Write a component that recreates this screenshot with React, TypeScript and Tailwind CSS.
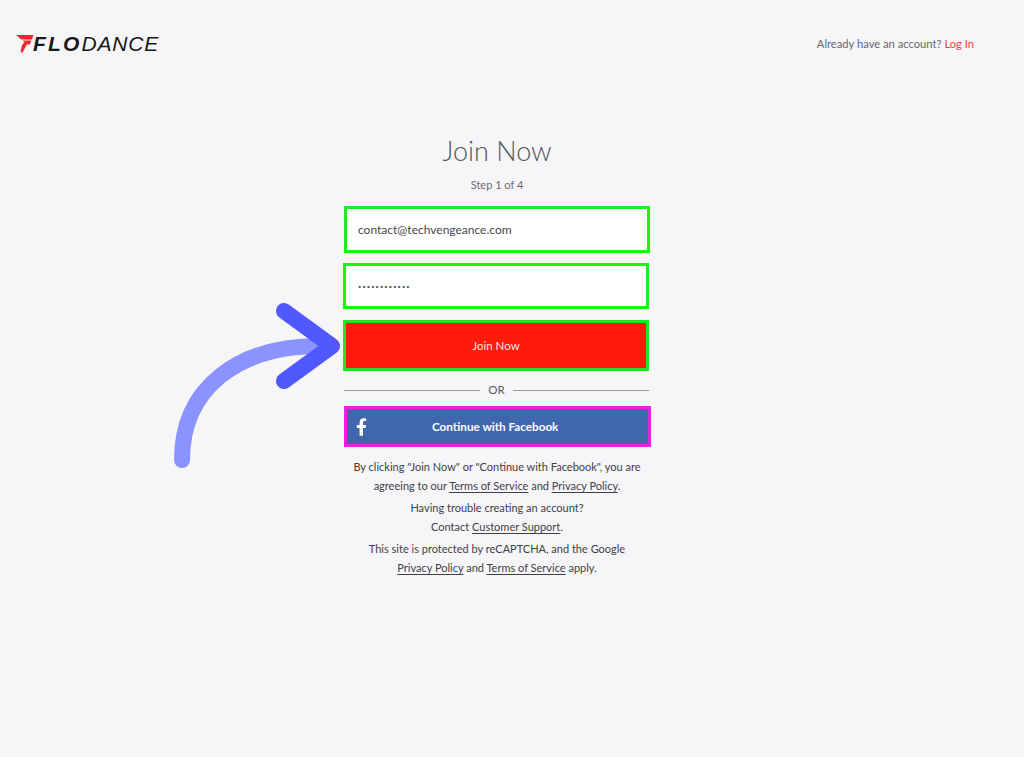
const bodyFont = "font-['Lato','Noto_Sans',sans-serif]";

const Logo = () => {
  return (
    <div className="flex items-center">
      <svg width="18" height="18" viewBox="0 0 18 18" className="shrink-0">
        <path d="M0 0H17.5L16 4.6H5.2z" fill="#ee2a2c" />
        <path d="M6.4 5.6H15.4L14 9.6H10.8L6.6 17.6H4.6C5 12.6 5.8 9 8.6 7.4z" fill="#ee2a2c" />
      </svg>
      <div className="ml-[-1px] font-['Liberation_Sans',sans-serif] text-[21px] leading-6 italic text-[#17181a]">
        <span className="font-bold tracking-[2.2px]">FLO</span>
        <span className="font-normal tracking-[0.8px]">DANCE</span>
      </div>
    </div>
  );
};

const Arrow = () => {
  return (
    <svg
      width="200"
      height="190"
      viewBox="160 290 200 190"
      className="absolute top-[290px] left-[160px]"
    >
      <path
        d="M182 460C182 388 238 346 320 346"
        fill="none"
        stroke="#8a93ff"
        strokeWidth="16"
        strokeLinecap="round"
      />
      <path
        d="M284 311L332 346L284 381"
        fill="none"
        stroke="#5058ff"
        strokeWidth="16"
        strokeLinecap="round"
        strokeLinejoin="round"
      />
    </svg>
  );
};

const Link = ({ children }: { children: string }) => {
  return <span className="underline underline-offset-2">{children}</span>;
};

const App = () => {
  return (
    <div className={`relative h-[757px] overflow-hidden bg-[#f6f6f9] ${bodyFont}`}>
      <header className="flex items-center justify-between pt-[32px] pr-[50px] pl-[16px]">
        <Logo />
        <div className="text-[11.2px] text-[#66676b]">
          Already have an account? <span className="text-[#ee3a45]">Log In</span>
        </div>
      </header>

      <main className="mt-[77px] ml-[343px] flex w-[308px] flex-col">
        <h1 className="text-center text-[27px] leading-[36px] font-light text-[#55565c]">
          Join Now
        </h1>
        <div className="mt-[8px] text-center text-[11px] leading-[16px] text-[#6a6b70]">
          Step 1 of 4
        </div>

        <div className="mt-[13px] ml-[1px] flex h-[47px] w-[306px] items-center border-[3px] border-[#1bf01b] bg-white px-[11px] text-[12px] text-[#45464a]">
          contact@techvengeance.com
        </div>
        <div className="mt-[10px] flex h-[46px] w-[306px] items-center border-[3px] border-[#1bf01b] bg-white px-[12px] text-[12px] font-bold tracking-[1.1px] text-[#55565c]">
          ············
        </div>
        <button className="mt-[11px] flex h-[51px] w-[306px] items-center justify-center border-[3px] border-[#1fe51f] bg-[#ff1a0e] text-[11.5px] text-[#fbe4e0]">
          Join Now
        </button>

        <div className="mt-[11px] flex items-center gap-2 pr-[2px] pl-[1px] text-[11.5px] leading-[16px] text-[#55565c]">
          <div className="h-px flex-1 bg-[#9a9a9e]" />
          <span>OR</span>
          <div className="h-px flex-1 bg-[#9a9a9e]" />
        </div>

        <button className="mt-[8px] ml-[1px] flex h-[41px] w-[307px] items-center border-[3px] border-[#ee1ee8] bg-[#4066ad] text-[11.7px] font-bold text-white">
          <svg width="11" height="18" viewBox="0 0 320 512" fill="#fff" className="ml-[9px] shrink-0">
            <path d="M279 288l14-93h-89v-60c0-25 12-50 52-50h41V7s-37-7-72-7c-73 0-121 45-121 125v70H23v93h81v224h100V288z" />
          </svg>
          <span className="ml-[65px]">Continue with Facebook</span>
        </button>

        <div className="mt-[10px] text-center text-[11px] leading-[19px] text-[#3f4045]">
          <p>
            By clicking "Join Now" or "Continue with Facebook", you are
            <br />
            agreeing to our <Link>Terms of Service</Link> and <Link>Privacy Policy</Link>.
          </p>
          <p className="mt-[3px]">
            Having trouble creating an account?
            <br />
            Contact <Link>Customer Support</Link>.
          </p>
          <p className="mt-[3px]">
            This site is protected by reCAPTCHA, and the Google
            <br />
            <Link>Privacy Policy</Link> and <Link>Terms of Service</Link> apply.
          </p>
        </div>
      </main>

      <Arrow />
    </div>
  );
};

export default App;
